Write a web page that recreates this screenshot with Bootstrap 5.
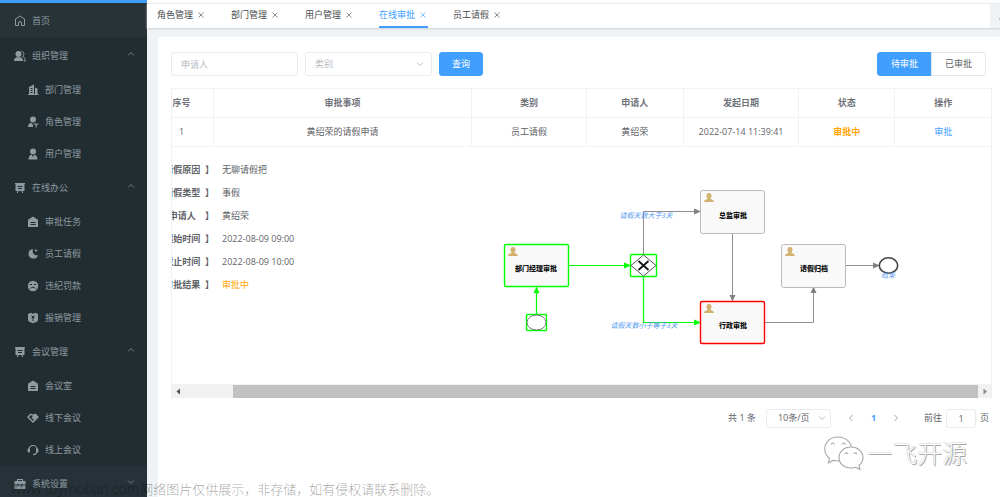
<!DOCTYPE html>
<html lang="zh-CN">
<head>
<meta charset="utf-8">
<meta name="viewport" content="width=device-width, initial-scale=1">
<title>在线审批</title>
<link href="https://cdn.jsdelivr.net/npm/bootstrap@5.3.0/dist/css/bootstrap.min.css" rel="stylesheet">
<style>
body{font-family:"Open Sans","Noto Sans CJK SC",sans-serif;font-size:9px;line-height:14px;color:#606266;background:#eff3f5}
a{text-decoration:none;color:inherit}
.side{width:147px;background:#222d32;color:#8e9ba1;border-top:3px solid #409eff}
.side svg{width:12px;height:12px;flex:none;fill:currentColor}
.side a{display:flex;align-items:center;white-space:nowrap}
.side .top-item{height:36px;padding:0 12px 0 14px;gap:6px}
.side .home-item{height:35px;background:#283338}
.side .lit{background:#263238}
.side .sub-item{height:32px;padding-left:27px;gap:6px}
.side .arrow{width:8px;height:8px;fill:none;stroke:#6f7c82;margin-left:auto;margin-bottom:4px}
.tabs{height:25px;margin-top:3px;border-top:1px solid #e9ebec;box-shadow:0 1px 2px #d0d4d6;background:#fff;padding-left:10px;color:#4a4c50;z-index:1}
.tabs .tab-list{gap:25px}
.tabs a{width:49px;display:flex;align-items:center;justify-content:space-between;border-bottom:2px solid transparent;white-space:nowrap}
.tabs a.active{color:#409eff;border-color:#409eff}
.tabs svg{width:6px;height:6px;stroke:currentColor;fill:none;margin-right:2px;opacity:.8}
.tabs .more{width:10px;background:#eff3f5;padding:9px 0 0 9px}
.panel{margin:9px 0 0 11px;padding:15px 8px 0 13px;background:#fff;border-radius:3px 0 0 0}
.ctl{height:24px;font-size:9px;line-height:14px;padding:4px 9px;border:1px solid #e8ebf1;border-radius:3px;color:#606266;box-shadow:none}
.ctl::placeholder{color:#b8bcc5}
.w-field{width:127px}
.search{gap:7px;padding-right:6px}
select.ctl{background-size:8px 8px;background-position:right 7px center;color:#b8bcc5;background-image:url("data:image/svg+xml,%3Csvg xmlns='http://www.w3.org/2000/svg' viewBox='0 0 8 8'%3E%3Cpath d='M1 2.5l3 3 3-3' fill='none' stroke='%23b8bcc5'/%3E%3C/svg%3E")}
.act{height:24px;font-size:9px;line-height:14px;padding:4px 13px;border-radius:3px}
.search>.act{padding:4px 12px}
.btn-primary{--bs-btn-bg:#409eff;--bs-btn-border-color:#409eff}
.btn-plain{border:1px solid #e4e7ed;color:#606266;background:#fff}
.grid{table-layout:fixed;border:1px solid #f0f2f7;margin-top:12px;margin-bottom:0;color:#606266}
.grid th,.grid td{padding:7px 0;height:29px;text-align:center;vertical-align:middle;border:1px solid #f0f2f7;white-space:nowrap}
.grid th{color:#70737a;font-weight:600}
.grid .first{padding-right:22px}
.grid td.detail{padding:0;height:238px;border-bottom:0;text-align:left;vertical-align:top}
.warn{color:#ffa500}
.info{padding-top:11px}
.info dl{margin:0}
.info div{height:23px;display:flex;align-items:center;gap:8px}
.info dt{width:42px;display:flex;justify-content:flex-end;overflow:hidden;font-weight:700}
.info dd{margin:0}
.flow{width:502px;height:180px;margin-top:33px;flex:none}
.flow text{text-anchor:middle}
.flow .step{font-size:7px;font-weight:900;fill:#111}
.flow .cond{font-size:7px;font-style:italic;fill:#4a94ee}
.hbar{height:13px;background:#f1f1f1}
.hbar .arr{width:14px;height:13px;flex:none}
.hbar .thumb{background:#c1c1c1;margin-left:48px}
.pager{margin-top:10px;height:20px}
.pager .ctl{height:19px;padding:1px 0 1px 11px}
.pager .size{width:65px;color:#606266;margin-left:10px;background-position:right 4px center}
.pager .goto{width:30px;padding:1px;text-align:center}
.pager svg{width:8px;height:8px;fill:none;stroke:#a5a8b0}
.brand{right:33px;bottom:26px;gap:3px}
.brand svg{width:40px;height:35px}
.brand span{font-size:25px;line-height:36px;font-weight:300;color:#fff;text-shadow:1px 1px 0 #a8a8a8,0 0 1px #999}
.notice{left:11px;bottom:0;gap:1px;font-size:13px;line-height:16px;color:rgba(0,0,0,.38);white-space:nowrap;font-weight:300}
.notice .site{font-size:14px}
</style>
</head>
<body>
<svg class="d-none">
<symbol id="up" viewBox="0 0 8 8"><path d="M1 5.500l3-3 3 3"/></symbol>
<symbol id="down" viewBox="0 0 8 8"><path d="M1 2.500l3 3 3-3"/></symbol>
<symbol id="x" viewBox="0 0 6 6"><path d="M.5.5l5 5M5.500.5l-5 5" stroke-width=".8"/></symbol>
<symbol id="board" viewBox="0 0 12 12"><path fill-rule="evenodd" d="M1 1h10v1h-.5v7H8.500l.8 2H8.200l-.8-2H4.600l-.8 2H2.700l.8-2h-2V2H1zM3.500 4v1h5V4zM4 6v1h4V6z"/></symbol>
<symbol id="house" viewBox="0 0 12 12"><path fill-rule="evenodd" d="M6 .5l5 3.200V11H1V3.700zM3.500 6v1h5V6zM3.500 8v1h5V8z"/></symbol>
<symbol id="man" viewBox="0 0 12 12"><circle cx="6" cy="3.500" r="3"/><path d="M1.500 11.500c0-3 1.500-4.700 3.200-4.800L6 9l1.300-2.300c1.700.1 3.200 1.800 3.200 4.800z"/></symbol>
<symbol id="usr" viewBox="0 0 10 9"><path fill="#d2b26e" d="M5 0c1.700 0 2.600 1.200 2.500 2.800C7.400 4.200 7 4.900 6.300 5.500c0 1 3.300.8 3.700 3.500H0c.4-2.700 3.700-2.500 3.700-3.500C3 4.900 2.600 4.200 2.500 2.800 2.400 1.200 3.300 0 5 0z"/></symbol>
</svg>
<div class="d-flex vh-100 overflow-hidden position-relative">
<nav class="side flex-shrink-0 h-100 overflow-hidden">
<a href="#" class="top-item home-item"><svg viewBox="0 0 12 12"><path fill="none" stroke="currentColor" d="M1.500 10.500V4L6 1l4.500 3v6.500h-3V8a1.500 1.500 0 0 0-3 0v2.500z"/></svg>首页</a>
<a href="#" class="top-item"><svg viewBox="0 0 12 12"><circle cx="4.500" cy="4" r="3"/><path d="M0 11c0-2 1-3.400 3-3.700h3c2 .3 3 1.700 3 3.700z"/><path d="M7.500 1.200c3 .2 3 4.600.8 5.300 2 .5 3 2 3 4.500h-1.500" fill="none" stroke="currentColor"/></svg>组织管理<svg class="arrow"><use href="#up"/></svg></a>
<a href="#" class="sub-item"><svg viewBox="0 0 12 12"><path fill-rule="evenodd" d="M2 3l5-2.500V10h1V3.500l2.500 1V10h1v1H1v-1h1zM3.500 4v1h2V4zM3.500 6v1h2V6zM3.500 8v1h2V8z"/></svg>部门管理</a>
<a href="#" class="sub-item"><svg viewBox="0 0 12 12"><circle cx="6" cy="3.500" r="3"/><path d="M1 11c0-2.500 1.200-4 3.500-4.200L6 9v2zM6.500 7.500h5v1H10l-.5 3h-1V8.500h-2z"/></svg>角色管理</a>
<a href="#" class="sub-item"><svg><use href="#man"/></svg>用户管理</a>
<a href="#" class="top-item"><svg><use href="#board"/></svg>在线办公<svg class="arrow"><use href="#up"/></svg></a>
<a href="#" class="sub-item"><svg><use href="#house"/></svg>审批任务</a>
<a href="#" class="sub-item"><svg viewBox="0 0 12 12"><path d="M6 1a4.800 4.800 0 1 0 5 6C8 8.500 4.500 5 6 1zM9 .5l.5 1.500 1.500.5-1.500.5L9 4.500 8.500 3 7 2.500 8.500 2z"/></svg>员工请假</a>
<a href="#" class="sub-item"><svg viewBox="0 0 12 12"><circle cx="6" cy="6" r="5.200"/><path d="M3 4.500h2M7 4.500h2M3.500 8.500c1-1.700 4-1.700 5 0" fill="none" stroke="#222d32"/></svg>违纪罚款</a>
<a href="#" class="sub-item"><svg viewBox="0 0 12 12"><path d="M1 2l2-1h1.500L6 2l1.500-1H9l2 1v6c0 1.500-2.500 2.500-5 3.200C3.500 10.500 1 9.500 1 8z"/><path d="M4.500 3.500L6 5l1.500-1.500M4.500 5.500h3M6 5v4" fill="none" stroke="#222d32"/></svg>报销管理</a>
<a href="#" class="top-item"><svg><use href="#board"/></svg>会议管理<svg class="arrow"><use href="#up"/></svg></a>
<a href="#" class="sub-item"><svg><use href="#house"/></svg>会议室</a>
<a href="#" class="sub-item"><svg viewBox="0 0 12 12"><path d="M0 5l3.500-3.500L6 2.500 8.500 1.500 12 5 6 11zM2 5l4 4 1-1-2.500-2.500L6 4 4 3z" fill-rule="evenodd"/></svg>线下会议</a>
<a href="#" class="sub-item"><svg viewBox="0 0 12 12"><path d="M2 7V5.500a4 4 0 0 1 8 0V7c0 2.500-1.500 3.500-4 3.700" fill="none" stroke="currentColor" stroke-width="1.200"/><rect x=".6" y="4.500" width="2.400" height="4" rx="1"/><rect x="9" y="4.500" width="2.400" height="4" rx="1"/></svg>线上会议</a>
<a href="#" class="top-item lit"><svg viewBox="0 0 12 12"><path fill-rule="evenodd" d="M3 3V1h6v2h2.500v3.500h-3v-1h-1v1h-3v-1h-1v1h-3V3zM4 2v1h4V2zM.5 7.500h3v1h1v-1h3v1h1v-1h3V11H.5z"/></svg>系统设置<svg class="arrow"><use href="#down"/></svg></a>
</nav>
<div class="flex-grow-1 d-flex flex-column" style="min-width:0">
<div class="bg-white flex-shrink-0">
<div class="tabs d-flex justify-content-between position-relative">
<div class="tab-list d-flex">
<a href="#">角色管理<svg><use href="#x"/></svg></a>
<a href="#">部门管理<svg><use href="#x"/></svg></a>
<a href="#">用户管理<svg><use href="#x"/></svg></a>
<a href="#" class="active">在线审批<svg><use href="#x"/></svg></a>
<a href="#">员工请假<svg><use href="#x"/></svg></a>
</div>
<div class="more overflow-hidden"><svg style="stroke:#777"><path d="M0 1h6"/></svg></div>
</div>
</div>
<main class="panel flex-grow-1">
<form class="search d-flex align-items-center">
<input class="form-control ctl w-field" placeholder="申请人" aria-label="申请人">
<select class="form-select ctl w-field" aria-label="类别"><option>类别</option></select>
<button type="button" class="btn btn-primary act">查询</button>
<div class="btn-group ms-auto"><button type="button" class="btn btn-primary act">待审批</button><button type="button" class="btn btn-plain act">已审批</button></div>
</form>
<table class="table grid">
<colgroup><col style="width:42px"><col><col style="width:14%"><col style="width:11.800%"><col style="width:14.100%"><col style="width:11.700%"><col style="width:11.800%"></colgroup>
<thead><tr><th class="first">序号</th><th>审批事项</th><th>类别</th><th>申请人</th><th>发起日期</th><th>状态</th><th>操作</th></tr></thead>
<tbody>
<tr><td class="first">1</td><td>黄绍荣的请假申请</td><td>员工请假</td><td>黄绍荣</td><td>2022-07-14 11:39:41</td><td class="warn fw-bold">审批中</td><td><a href="#" style="color:#409eff">审批</a></td></tr>
<tr><td colspan="7" class="detail"><div class="d-flex justify-content-between">
<div class="info"><dl>
<div><dt>【请假原因&nbsp;&nbsp;】</dt><dd>无聊请假把</dd></div>
<div><dt>【请假类型&nbsp;&nbsp;】</dt><dd>事假</dd></div>
<div><dt>【申请人&nbsp;&nbsp;&nbsp;&nbsp;】</dt><dd>黄绍荣</dd></div>
<div><dt>【起始时间&nbsp;&nbsp;】</dt><dd>2022-08-09 09:00</dd></div>
<div><dt>【截止时间&nbsp;&nbsp;】</dt><dd>2022-08-09 10:00</dd></div>
<div><dt>【审批结果&nbsp;&nbsp;】</dt><dd class="warn">审批中</dd></div>
</dl></div>
<svg class="flow" viewBox="-1 0 502 180">
<g fill="none" stroke="#8f8f8f"><path d="M153.500 74V31.500H205M242.500 53v63M275 142.500h48.500V112M356 85.500h28"/></g>
<g fill="none" stroke="#0f0" stroke-width="1.200"><path d="M78 85.500h57M46.500 134v-22M153.500 97v45.500H205"/></g>
<path fill="#808080" d="M204 28.500l7 3-7 3zM239.500 115l3 6.500 3-6.500zM320.500 113l3-6.500 3 6.500zM383 82.500l7 3-7 3z"/>
<path fill="#0f0" d="M134 82.500l7 3-7 3zM43.500 113l3-6.500 3 6.500zM204 139.500l7 3-7 3z"/>
<g fill="#f9f9f9" stroke="#bbb"><rect x="210.500" y="10.500" width="64" height="43" rx="2"/><rect x="291.500" y="64.500" width="64" height="43" rx="2"/>
<rect x="14.500" y="64.500" width="64" height="42" rx="1.500" stroke="#0f0" stroke-width="1.400"/><rect x="210.500" y="121.500" width="64" height="42" rx="1.500" stroke="#f00" stroke-width="1.400"/></g>
<g fill="#fff"><rect x="140.500" y="74.500" width="26" height="22" rx="1" stroke="#0f0" stroke-width="1.400"/><path d="M141 85.500l12.500-10.500L166 85.500 153.500 96z" stroke="#555"/><rect x="36.500" y="134.500" width="20" height="16" rx="1" stroke="#0f0" stroke-width="1.400"/><ellipse cx="46.500" cy="142.500" rx="9.500" ry="7.500" stroke="#777"/><ellipse cx="398.500" cy="85.500" rx="9.200" ry="7.700" stroke="#444" stroke-width="1.600"/></g>
<path d="M148.500 81l10 9M158.500 81l-10 9" stroke="#111" stroke-width="1.700"/>
<use href="#usr" x="18" y="67" width="10" height="9"/><use href="#usr" x="214" y="13" width="10" height="9"/><use href="#usr" x="214" y="124" width="10" height="9"/><use href="#usr" x="295" y="67" width="10" height="9"/>
<text class="step" x="46" y="91">部门经理审批</text><text class="step" x="243" y="38">总监审批</text><text class="step" x="243" y="148">行政审批</text><text class="step" x="324" y="91">请假归档</text>
<text class="cond" x="156" y="38">请假天数大于3天</text><text class="cond" x="154" y="148">请假天数小于等于3天</text><text class="cond" x="398" y="98">结束</text>
</svg>
</div></td></tr>
</tbody>
</table>
<div class="hbar d-flex">
<svg class="arr" viewBox="0 0 14 13"><path d="M9 3.500v6l-3.500-3z" fill="#505050"/></svg>
<div class="thumb flex-grow-1"></div>
<svg class="arr" viewBox="0 0 14 13"><path d="M5.500 3.500v6l3.500-3z" fill="#8a8a8a"/></svg>
</div>
<div class="pager d-flex align-items-center justify-content-end" style="padding-right:3px">
<span>共 1 条</span>
<select class="form-select ctl size" aria-label="每页条数"><option>10条/页</option></select>
<svg class="ms-3"><path d="M5.500 1l-3 3 3 3"/></svg>
<a href="#" class="fw-bold px-3" style="color:#409eff">1</a>
<svg class="me-4"><path d="M2.500 1l3 3-3 3"/></svg>
<label for="goto">前往</label><input id="goto" class="form-control ctl goto mx-1" value="1"><span>页</span>
</div>
</main>
</div>
<div class="brand position-absolute d-flex align-items-center">
<svg viewBox="0 0 40 35"><g fill="#fff" stroke="#a6a6a6" stroke-width="1.100"><path d="M14 1c7.500 0 13.500 5 13.500 12S21.500 25 14 25c-1.700 0-3.200-.3-4.600-.8L4.500 27l1-4.600C2.500 20 .8 17 .8 13 .8 6 6.500 1 14 1z"/><path d="M27 11c7 0 12 4.700 12 10.500 0 3.500-1.600 6-4 8l1 4-4.200-2.200c-1.500.5-3 .7-4.800.7-7 0-12-4.700-12-10.500S20 11 27 11z"/></g><g fill="none" stroke="#888"><path d="M7 8.500c.7-2 2.800-2 3.500 0M18 8.500c.7-2 2.800-2 3.500 0M21 18c.6-1.700 2.400-1.700 3 0M30 18c.6-1.700 2.400-1.700 3 0"/></g></svg>
<span>一飞开源</span>
</div>
<div class="notice position-absolute d-flex"><span class="site">www.toymoban.com</span><span>网络图片仅供展示，非存储，如有侵权请联系删除。</span></div>
</div>
<script src="https://cdn.jsdelivr.net/npm/bootstrap@5.3.0/dist/js/bootstrap.bundle.min.js"></script>
</body>
</html>
